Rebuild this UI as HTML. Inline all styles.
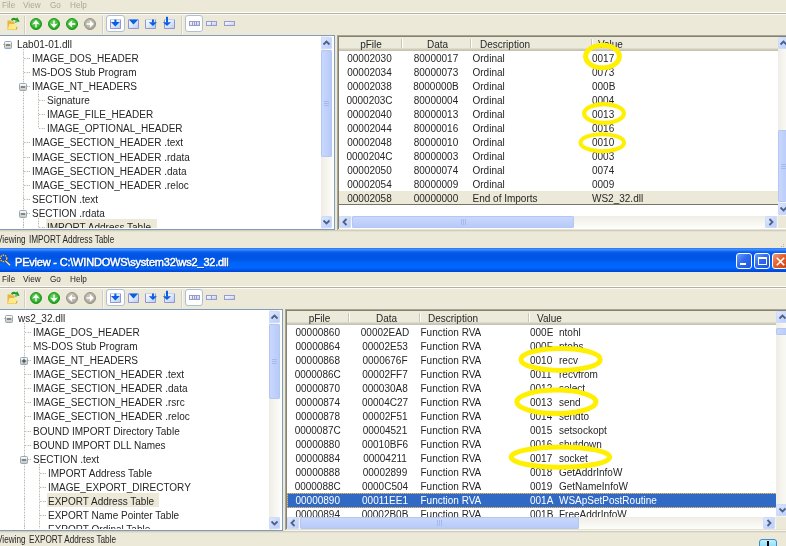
<!DOCTYPE html>
<html><head><meta charset="utf-8"><style>
html,body{margin:0;padding:0;}
body{width:786px;height:546px;overflow:hidden;position:relative;background:#ECE9D8;font-family:"Liberation Sans",sans-serif;}
.t{position:absolute;white-space:pre;line-height:14px;font-family:"Liberation Sans",sans-serif;color:#262626;}
.r{position:absolute;}
</style></head><body>
<svg width="0" height="0" style="position:absolute"><defs>
<linearGradient id="boxg" x1="0" y1="0" x2="0" y2="1"><stop offset="0" stop-color="#FFFFFF"/><stop offset="1" stop-color="#C9C3AE"/></linearGradient>
<linearGradient id="bxg" x1="0" y1="0" x2="1" y2="1"><stop offset="0" stop-color="#FFFFFF"/><stop offset="0.5" stop-color="#DDE8FA"/><stop offset="1" stop-color="#B4CCF2"/></linearGradient>
<radialGradient id="gg" cx="0.45" cy="0.4" r="0.6"><stop offset="0" stop-color="#7CD870"/><stop offset="0.6" stop-color="#3CBB34"/><stop offset="1" stop-color="#1E9E1C"/></radialGradient>
<radialGradient id="gy" cx="0.45" cy="0.4" r="0.6"><stop offset="0" stop-color="#CFCDC3"/><stop offset="0.6" stop-color="#B8B5A9"/><stop offset="1" stop-color="#A3A094"/></radialGradient>
</defs></svg>
<div style="position:absolute;left:0;top:0;width:786px;height:546px;overflow:hidden;will-change:transform">
<div class="t" style="left:1.5px;top:-2px;font-size:9.3px;color:#ACA899;font-weight:normal;transform:scaleX(0.88);transform-origin:0 0;">File</div>
<div class="t" style="left:23px;top:-2px;font-size:9.3px;color:#ACA899;font-weight:normal;transform:scaleX(0.88);transform-origin:0 0;">View</div>
<div class="t" style="left:50px;top:-2px;font-size:9.3px;color:#ACA899;font-weight:normal;transform:scaleX(0.88);transform-origin:0 0;">Go</div>
<div class="t" style="left:69.5px;top:-2px;font-size:9.3px;color:#ACA899;font-weight:normal;transform:scaleX(0.88);transform-origin:0 0;">Help</div>
<div class="r" style="left:0px;top:12px;width:786px;height:1px;background:#FFFFFF;"></div>
<div class="r" style="left:0px;top:13px;width:786px;height:1px;background:#B5B19F;"></div>
<div class="r" style="left:0px;top:14px;width:786px;height:1px;background:#FAF9F4;"></div>
<svg class="r" style="left:7px;top:17px;" width="13" height="14" viewBox="0 0 13 14"><path d="M0.5 3.5 L3.5 3.5 L4.5 4.5 L7.5 4.5 L7.5 12.8 L0.5 12.8 Z" fill="#E6B73A"/><path d="M0.8 12.8 L2.3 7 L9.8 7 L8.3 12.8 Z" fill="#FFE98A"/><path d="M0.6 12.8 L8.6 12.8 L9.6 9.5 L10.6 10.5 L9.2 13 L0.6 13 Z" fill="#D9A11C"/><path d="M4 2.6 Q5.5 -0.2 9.2 1.4 L10.2 0.2 L12.6 4.6 L8 5.8 L8.9 3.4 Q6.5 2.2 5 4 Z" fill="#1E9A1E"/><path d="M9 3.2 L11.3 4.3 L9.3 5 Z" fill="#6FE06A"/></svg>
<div class="r" style="left:24px;top:16px;width:1px;height:18px;background:#D3CFBF;"></div>
<div class="r" style="left:25px;top:16px;width:1px;height:18px;background:#F7F6F0;"></div>
<svg class="r" style="left:30px;top:18px;" width="12" height="12" viewBox="0 0 12 12"><circle cx="6" cy="6" r="5.5" fill="url(#gg)" stroke="#139014" stroke-width="0.9"/><g transform="rotate(0 6 6)"><path d="M6 2.1 L9.9 6.4 Q8 5.8 6.65 6.1 L6.65 9.5 L5.35 9.5 L5.35 6.1 Q4 5.8 2.1 6.4 Z" fill="#fff"/></g></svg>
<svg class="r" style="left:48px;top:18px;" width="12" height="12" viewBox="0 0 12 12"><circle cx="6" cy="6" r="5.5" fill="url(#gg)" stroke="#139014" stroke-width="0.9"/><g transform="rotate(180 6 6)"><path d="M6 2.1 L9.9 6.4 Q8 5.8 6.65 6.1 L6.65 9.5 L5.35 9.5 L5.35 6.1 Q4 5.8 2.1 6.4 Z" fill="#fff"/></g></svg>
<svg class="r" style="left:66px;top:18px;" width="12" height="12" viewBox="0 0 12 12"><circle cx="6" cy="6" r="5.5" fill="url(#gg)" stroke="#139014" stroke-width="0.9"/><g transform="rotate(-90 6 6)"><path d="M6 2.1 L9.9 6.4 Q8 5.8 6.65 6.1 L6.65 9.5 L5.35 9.5 L5.35 6.1 Q4 5.8 2.1 6.4 Z" fill="#fff"/></g></svg>
<svg class="r" style="left:84px;top:18px;" width="12" height="12" viewBox="0 0 12 12"><circle cx="6" cy="6" r="5.5" fill="url(#gy)" stroke="#8F8C80" stroke-width="0.9"/><g transform="rotate(90 6 6)"><path d="M6 2.1 L9.9 6.4 Q8 5.8 6.65 6.1 L6.65 9.5 L5.35 9.5 L5.35 6.1 Q4 5.8 2.1 6.4 Z" fill="#fff"/></g></svg>
<div class="r" style="left:102px;top:16px;width:1px;height:18px;background:#D3CFBF;"></div>
<div class="r" style="left:103px;top:16px;width:1px;height:18px;background:#F7F6F0;"></div>
<div class="r" style="left:106px;top:15px;width:19px;height:17px;background:#FFFFFF;border:1px solid #AFC0D3;border-radius:3px;box-sizing:border-box;"></div>
<svg class="r" style="left:110px;top:19px;overflow:visible;" width="11" height="10" viewBox="0 0 11 10"><rect x="0.5" y="0.5" width="10" height="9" fill="url(#bxg)"/><path d="M0.5 0.5 L0.5 9.5 L10.5 9.5 L10.5 0.5" fill="none" stroke="#9494D0"/><line x1="0.5" y1="0.5" x2="10.5" y2="0.5" stroke="#C8D0F0"/><path d="M0.9 3 L9.8 3 L5.35 7.6 Z" fill="#0A5FE0"/><rect x="4.4" y="0.6" width="2" height="3" fill="#0A5FE0"/></svg>
<svg class="r" style="left:127.5px;top:19px;overflow:visible;" width="11" height="10" viewBox="0 0 11 10"><rect x="0.5" y="0.5" width="10" height="9" fill="url(#bxg)"/><path d="M0.5 0.5 L0.5 9.5 L10.5 9.5 L10.5 0.5" fill="none" stroke="#9494D0"/><line x1="0.5" y1="0.5" x2="10.5" y2="0.5" stroke="#C8D0F0"/><path d="M0.8 0.6 L10.2 0.6 L5.5 5.4 Z" fill="#0A5FE0"/></svg>
<svg class="r" style="left:145px;top:19px;overflow:visible;" width="11" height="10" viewBox="0 0 11 10"><rect x="0.5" y="0.5" width="10" height="9" fill="url(#bxg)"/><path d="M0.5 0.5 L0.5 9.5 L10.5 9.5 L10.5 0.5" fill="none" stroke="#9494D0"/><line x1="0.5" y1="0.5" x2="10.5" y2="0.5" stroke="#C8D0F0"/><path d="M3.8 3.2 L12 3.2 L7.9 7 Z" fill="#0A5FE0"/><rect x="7" y="0.5" width="1.9" height="3.2" fill="#0A5FE0"/></svg>
<svg class="r" style="left:164px;top:19px;overflow:visible;" width="11" height="10" viewBox="0 0 11 10"><rect x="0.5" y="0.5" width="10" height="9" fill="url(#bxg)"/><path d="M0.5 0.5 L0.5 9.5 L10.5 9.5 L10.5 0.5" fill="none" stroke="#9494D0"/><line x1="0.5" y1="0.5" x2="10.5" y2="0.5" stroke="#C8D0F0"/><path d="M-1.1 3.2 L7.1 3.2 L3 7 Z" fill="#0A5FE0"/><rect x="2" y="-2.2" width="2" height="5.8" fill="#0A5FE0"/></svg>
<div class="r" style="left:181px;top:16px;width:1px;height:18px;background:#D3CFBF;"></div>
<div class="r" style="left:182px;top:16px;width:1px;height:18px;background:#F7F6F0;"></div>
<div class="r" style="left:185px;top:15px;width:18px;height:17px;background:#FFFFFF;border:1px solid #AFC0D3;border-radius:3px;box-sizing:border-box;"></div>
<svg class="r" style="left:189px;top:21px;" width="11" height="5" viewBox="0 0 11 5"><rect x="0.5" y="0.5" width="10" height="4" fill="url(#bxg)" stroke="#9A9ACB"/><line x1="3.5" y1="1" x2="3.5" y2="4" stroke="#9A9ACB"/><line x1="5.5" y1="1" x2="5.5" y2="4" stroke="#9A9ACB"/><line x1="7.5" y1="1" x2="7.5" y2="4" stroke="#9A9ACB"/></svg>
<svg class="r" style="left:206px;top:21px;" width="11" height="5" viewBox="0 0 11 5"><rect x="0.5" y="0.5" width="10" height="4" fill="url(#bxg)" stroke="#9A9ACB"/><line x1="5.5" y1="1" x2="5.5" y2="4" stroke="#9A9ACB"/></svg>
<svg class="r" style="left:224px;top:21px;" width="11" height="5" viewBox="0 0 11 5"><rect x="0.5" y="0.5" width="10" height="4" fill="url(#bxg)" stroke="#9A9ACB"/></svg>
<div class="r" style="left:0px;top:35px;width:335px;height:1px;background:#7F9DB9;"></div>
<div class="r" style="left:0px;top:229px;width:335px;height:1px;background:#7F9DB9;"></div>
<div class="r" style="left:334px;top:35px;width:1px;height:195px;background:#7F9DB9;"></div>
<div class="r" style="left:0px;top:36px;width:334px;height:193px;background:#FFFFFF;"></div>
<div class="r" style="left:0;top:36px;width:334px;height:192px;overflow:hidden">
<div class="r" style="left:3px;top:8px;width:2px;height:1px;background:repeating-linear-gradient(90deg,#BDBDB5 0 1px,#EAEAE5 1px 2.7px);"></div>
<div class="r" style="left:23px;top:13px;width:1px;height:201px;background:repeating-linear-gradient(180deg,#BDBDB5 0 1px,#EAEAE5 1px 2.7px);"></div>
<div class="r" style="left:24px;top:22px;width:6px;height:1px;background:repeating-linear-gradient(90deg,#BDBDB5 0 1px,#EAEAE5 1px 2.7px);"></div>
<div class="r" style="left:24px;top:36px;width:6px;height:1px;background:repeating-linear-gradient(90deg,#BDBDB5 0 1px,#EAEAE5 1px 2.7px);"></div>
<div class="r" style="left:24px;top:50px;width:6px;height:1px;background:repeating-linear-gradient(90deg,#BDBDB5 0 1px,#EAEAE5 1px 2.7px);"></div>
<div class="r" style="left:38px;top:55px;width:1px;height:37px;background:repeating-linear-gradient(180deg,#BDBDB5 0 1px,#EAEAE5 1px 2.7px);"></div>
<div class="r" style="left:39px;top:64px;width:6px;height:1px;background:repeating-linear-gradient(90deg,#BDBDB5 0 1px,#EAEAE5 1px 2.7px);"></div>
<div class="r" style="left:39px;top:78px;width:6px;height:1px;background:repeating-linear-gradient(90deg,#BDBDB5 0 1px,#EAEAE5 1px 2.7px);"></div>
<div class="r" style="left:39px;top:92px;width:6px;height:1px;background:repeating-linear-gradient(90deg,#BDBDB5 0 1px,#EAEAE5 1px 2.7px);"></div>
<div class="r" style="left:24px;top:106px;width:6px;height:1px;background:repeating-linear-gradient(90deg,#BDBDB5 0 1px,#EAEAE5 1px 2.7px);"></div>
<div class="r" style="left:24px;top:121px;width:6px;height:1px;background:repeating-linear-gradient(90deg,#BDBDB5 0 1px,#EAEAE5 1px 2.7px);"></div>
<div class="r" style="left:24px;top:135px;width:6px;height:1px;background:repeating-linear-gradient(90deg,#BDBDB5 0 1px,#EAEAE5 1px 2.7px);"></div>
<div class="r" style="left:24px;top:149px;width:6px;height:1px;background:repeating-linear-gradient(90deg,#BDBDB5 0 1px,#EAEAE5 1px 2.7px);"></div>
<div class="r" style="left:24px;top:163px;width:6px;height:1px;background:repeating-linear-gradient(90deg,#BDBDB5 0 1px,#EAEAE5 1px 2.7px);"></div>
<div class="r" style="left:24px;top:177px;width:6px;height:1px;background:repeating-linear-gradient(90deg,#BDBDB5 0 1px,#EAEAE5 1px 2.7px);"></div>
<div class="r" style="left:38px;top:182px;width:1px;height:32px;background:repeating-linear-gradient(180deg,#BDBDB5 0 1px,#EAEAE5 1px 2.7px);"></div>
<div class="r" style="left:39px;top:191px;width:6px;height:1px;background:repeating-linear-gradient(90deg,#BDBDB5 0 1px,#EAEAE5 1px 2.7px);"></div>
<div class="t" style="left:17px;top:2px;font-size:10px;color:#262626;font-weight:normal;">Lab01-01.dll</div>
<svg class="r" style="left:4px;top:5px;" width="8" height="8" viewBox="0 0 8 8"><rect x="0.5" y="0.5" width="7" height="7" rx="1" fill="url(#boxg)" stroke="#8EA8C6"/><line x1="1.8" y1="4" x2="6.2" y2="4" stroke="#3A3A3A" stroke-width="1.1"/></svg>
<div class="t" style="left:32px;top:16px;font-size:10px;color:#262626;font-weight:normal;">IMAGE_DOS_HEADER</div>
<div class="t" style="left:32px;top:30px;font-size:10px;color:#262626;font-weight:normal;">MS-DOS Stub Program</div>
<div class="t" style="left:32px;top:44px;font-size:10px;color:#262626;font-weight:normal;">IMAGE_NT_HEADERS</div>
<svg class="r" style="left:19px;top:47px;" width="8" height="8" viewBox="0 0 8 8"><rect x="0.5" y="0.5" width="7" height="7" rx="1" fill="url(#boxg)" stroke="#8EA8C6"/><line x1="1.8" y1="4" x2="6.2" y2="4" stroke="#3A3A3A" stroke-width="1.1"/></svg>
<div class="t" style="left:47px;top:58px;font-size:10px;color:#262626;font-weight:normal;">Signature</div>
<div class="t" style="left:47px;top:72px;font-size:10px;color:#262626;font-weight:normal;">IMAGE_FILE_HEADER</div>
<div class="t" style="left:47px;top:86px;font-size:10px;color:#262626;font-weight:normal;">IMAGE_OPTIONAL_HEADER</div>
<div class="t" style="left:32px;top:100px;font-size:10px;color:#262626;font-weight:normal;">IMAGE_SECTION_HEADER .text</div>
<div class="t" style="left:32px;top:115px;font-size:10px;color:#262626;font-weight:normal;">IMAGE_SECTION_HEADER .rdata</div>
<div class="t" style="left:32px;top:129px;font-size:10px;color:#262626;font-weight:normal;">IMAGE_SECTION_HEADER .data</div>
<div class="t" style="left:32px;top:143px;font-size:10px;color:#262626;font-weight:normal;">IMAGE_SECTION_HEADER .reloc</div>
<div class="t" style="left:32px;top:157px;font-size:10px;color:#262626;font-weight:normal;">SECTION .text</div>
<div class="t" style="left:32px;top:171px;font-size:10px;color:#262626;font-weight:normal;">SECTION .rdata</div>
<svg class="r" style="left:19px;top:174px;" width="8" height="8" viewBox="0 0 8 8"><rect x="0.5" y="0.5" width="7" height="7" rx="1" fill="url(#boxg)" stroke="#8EA8C6"/><line x1="1.8" y1="4" x2="6.2" y2="4" stroke="#3A3A3A" stroke-width="1.1"/></svg>
<div class="r" style="left:45.5px;top:183px;width:111.5px;height:14px;background:#ECE9D8;"></div>
<div class="t" style="left:47px;top:185px;font-size:10px;color:#262626;font-weight:normal;">IMPORT Address Table</div>
</div>
<div class="r" style="left:321px;top:36px;width:12px;height:193px;background:linear-gradient(90deg,#EFEDE5,#FDFDFA);"></div>
<div class="r" style="left:321px;top:37px;width:11px;height:12px;background:linear-gradient(135deg,#E3EBFE 0%,#C8D7FC 55%,#B9CCFA 100%);border-radius:2px;box-shadow:inset 0 0 0 1px #CCDAFB;"></div>
<svg class="r" style="left:321px;top:37px;" width="11" height="12" viewBox="0 0 11 12"><polyline points="2.5,7.5 5.5,4.5 8.5,7.5" fill="none" stroke="#4D6185" stroke-width="1.8"/></svg>
<div class="r" style="left:321px;top:50px;width:11px;height:107px;background:linear-gradient(90deg,#CCD9FC,#BDCFFA 60%,#B7CAF7);border-radius:2px;box-shadow:inset 0 0 0 1px #B3C6F4;"></div>
<div class="r" style="left:324px;top:101px;width:5px;height:1px;background:#A4B9EE;"></div>
<div class="r" style="left:324px;top:103px;width:5px;height:1px;background:#A4B9EE;"></div>
<div class="r" style="left:324px;top:105px;width:5px;height:1px;background:#A4B9EE;"></div>
<div class="r" style="left:321px;top:216px;width:11px;height:12px;background:linear-gradient(135deg,#E3EBFE 0%,#C8D7FC 55%,#B9CCFA 100%);border-radius:2px;box-shadow:inset 0 0 0 1px #CCDAFB;"></div>
<svg class="r" style="left:321px;top:216px;" width="11" height="12" viewBox="0 0 11 12"><polyline points="2.5,4.5 5.5,7.5 8.5,4.5" fill="none" stroke="#4D6185" stroke-width="1.8"/></svg>
<div class="r" style="left:337px;top:35px;width:449px;height:196px;background:#FFFFFF;"></div>
<div class="r" style="left:337px;top:35px;width:449px;height:1px;background:#A7A493;"></div>
<div class="r" style="left:337px;top:36px;width:449px;height:1px;background:#85836F;"></div>
<div class="r" style="left:337px;top:35px;width:1px;height:196px;background:#A7A493;"></div>
<div class="r" style="left:338px;top:36px;width:1px;height:195px;background:#85836F;"></div>
<div class="r" style="left:337px;top:230px;width:449px;height:1px;background:#F4F3EE;"></div>
<div class="r" style="left:338px;top:229px;width:449px;height:1px;background:#E6E3D3;"></div>
<div class="r" style="left:339px;top:37px;width:439px;height:14px;background:#EBEADB;"></div>
<div class="r" style="left:339px;top:48px;width:439px;height:1px;background:#DFDBCB;"></div>
<div class="r" style="left:339px;top:49px;width:439px;height:1px;background:#D0CCBC;"></div>
<div class="r" style="left:339px;top:50px;width:439px;height:1px;background:#C6C2B1;"></div>
<div class="r" style="left:401px;top:39px;width:1px;height:9px;background:#CAC6B6;"></div>
<div class="r" style="left:402px;top:39px;width:1px;height:9px;background:#FFFFFF;"></div>
<div class="r" style="left:470px;top:39px;width:1px;height:9px;background:#CAC6B6;"></div>
<div class="r" style="left:471px;top:39px;width:1px;height:9px;background:#FFFFFF;"></div>
<div class="r" style="left:591px;top:39px;width:1px;height:9px;background:#CAC6B6;"></div>
<div class="r" style="left:592px;top:39px;width:1px;height:9px;background:#FFFFFF;"></div>
<div class="t" style="left:331px;top:38px;width:80px;text-align:center;font-size:10px">pFile</div>
<div class="t" style="left:397.5px;top:38px;width:80px;text-align:center;font-size:10px">Data</div>
<div class="t" style="left:480px;top:38px;font-size:10px;color:#262626;font-weight:normal;">Description</div>
<div class="t" style="left:598px;top:38px;font-size:10px;color:#262626;font-weight:normal;">Value</div>
<div class="r" style="left:339px;top:51px;width:439px;height:165px;overflow:hidden">
<div class="t" style="left:-9.5px;top:1px;width:80px;text-align:center;font-size:10px;color:#262626">00002030</div>
<div class="t" style="left:57px;top:1px;width:80px;text-align:center;font-size:10px;color:#262626">80000017</div>
<div class="t" style="left:133.5px;top:1px;font-size:10px;color:#262626;font-weight:normal;">Ordinal</div>
<div class="t" style="left:253px;top:1px;font-size:10px;color:#262626;font-weight:normal;">0017</div>
<div class="t" style="left:-9.5px;top:15px;width:80px;text-align:center;font-size:10px;color:#262626">00002034</div>
<div class="t" style="left:57px;top:15px;width:80px;text-align:center;font-size:10px;color:#262626">80000073</div>
<div class="t" style="left:133.5px;top:15px;font-size:10px;color:#262626;font-weight:normal;">Ordinal</div>
<div class="t" style="left:253px;top:15px;font-size:10px;color:#262626;font-weight:normal;">0073</div>
<div class="t" style="left:-9.5px;top:29px;width:80px;text-align:center;font-size:10px;color:#262626">00002038</div>
<div class="t" style="left:57px;top:29px;width:80px;text-align:center;font-size:10px;color:#262626">8000000B</div>
<div class="t" style="left:133.5px;top:29px;font-size:10px;color:#262626;font-weight:normal;">Ordinal</div>
<div class="t" style="left:253px;top:29px;font-size:10px;color:#262626;font-weight:normal;">000B</div>
<div class="t" style="left:-9.5px;top:43px;width:80px;text-align:center;font-size:10px;color:#262626">0000203C</div>
<div class="t" style="left:57px;top:43px;width:80px;text-align:center;font-size:10px;color:#262626">80000004</div>
<div class="t" style="left:133.5px;top:43px;font-size:10px;color:#262626;font-weight:normal;">Ordinal</div>
<div class="t" style="left:253px;top:43px;font-size:10px;color:#262626;font-weight:normal;">0004</div>
<div class="t" style="left:-9.5px;top:57px;width:80px;text-align:center;font-size:10px;color:#262626">00002040</div>
<div class="t" style="left:57px;top:57px;width:80px;text-align:center;font-size:10px;color:#262626">80000013</div>
<div class="t" style="left:133.5px;top:57px;font-size:10px;color:#262626;font-weight:normal;">Ordinal</div>
<div class="t" style="left:253px;top:57px;font-size:10px;color:#262626;font-weight:normal;">0013</div>
<div class="t" style="left:-9.5px;top:71px;width:80px;text-align:center;font-size:10px;color:#262626">00002044</div>
<div class="t" style="left:57px;top:71px;width:80px;text-align:center;font-size:10px;color:#262626">80000016</div>
<div class="t" style="left:133.5px;top:71px;font-size:10px;color:#262626;font-weight:normal;">Ordinal</div>
<div class="t" style="left:253px;top:71px;font-size:10px;color:#262626;font-weight:normal;">0016</div>
<div class="t" style="left:-9.5px;top:85px;width:80px;text-align:center;font-size:10px;color:#262626">00002048</div>
<div class="t" style="left:57px;top:85px;width:80px;text-align:center;font-size:10px;color:#262626">80000010</div>
<div class="t" style="left:133.5px;top:85px;font-size:10px;color:#262626;font-weight:normal;">Ordinal</div>
<div class="t" style="left:253px;top:85px;font-size:10px;color:#262626;font-weight:normal;">0010</div>
<div class="t" style="left:-9.5px;top:99px;width:80px;text-align:center;font-size:10px;color:#262626">0000204C</div>
<div class="t" style="left:57px;top:99px;width:80px;text-align:center;font-size:10px;color:#262626">80000003</div>
<div class="t" style="left:133.5px;top:99px;font-size:10px;color:#262626;font-weight:normal;">Ordinal</div>
<div class="t" style="left:253px;top:99px;font-size:10px;color:#262626;font-weight:normal;">0003</div>
<div class="t" style="left:-9.5px;top:113px;width:80px;text-align:center;font-size:10px;color:#262626">00002050</div>
<div class="t" style="left:57px;top:113px;width:80px;text-align:center;font-size:10px;color:#262626">80000074</div>
<div class="t" style="left:133.5px;top:113px;font-size:10px;color:#262626;font-weight:normal;">Ordinal</div>
<div class="t" style="left:253px;top:113px;font-size:10px;color:#262626;font-weight:normal;">0074</div>
<div class="t" style="left:-9.5px;top:127px;width:80px;text-align:center;font-size:10px;color:#262626">00002054</div>
<div class="t" style="left:57px;top:127px;width:80px;text-align:center;font-size:10px;color:#262626">80000009</div>
<div class="t" style="left:133.5px;top:127px;font-size:10px;color:#262626;font-weight:normal;">Ordinal</div>
<div class="t" style="left:253px;top:127px;font-size:10px;color:#262626;font-weight:normal;">0009</div>
<div class="r" style="left:0px;top:140px;width:439px;height:14px;background:#ECE9D8;"></div>
<div class="r" style="left:0px;top:153px;width:439px;height:1px;background:#77756A;"></div>
<div class="t" style="left:-9.5px;top:141px;width:80px;text-align:center;font-size:10px;color:#262626">00002058</div>
<div class="t" style="left:57px;top:141px;width:80px;text-align:center;font-size:10px;color:#262626">00000000</div>
<div class="t" style="left:133.5px;top:141px;font-size:10px;color:#262626;font-weight:normal;">End of Imports</div>
<div class="t" style="left:253px;top:141px;font-size:10px;color:#262626;font-weight:normal;">WS2_32.dll</div>
</div>
<div class="r" style="left:778px;top:37px;width:11px;height:179px;background:linear-gradient(90deg,#EFEDE5,#FDFDFA);"></div>
<div class="r" style="left:778px;top:37px;width:11px;height:12px;background:linear-gradient(135deg,#E3EBFE 0%,#C8D7FC 55%,#B9CCFA 100%);border-radius:2px;box-shadow:inset 0 0 0 1px #CCDAFB;"></div>
<svg class="r" style="left:778px;top:37px;" width="11" height="12" viewBox="0 0 11 12"><polyline points="2.5,7.5 5.5,4.5 8.5,7.5" fill="none" stroke="#4D6185" stroke-width="1.8"/></svg>
<div class="r" style="left:778px;top:130px;width:11px;height:72px;background:linear-gradient(90deg,#CCD9FC,#BDCFFA 60%,#B7CAF7);border-radius:2px;box-shadow:inset 0 0 0 1px #B3C6F4;"></div>
<div class="r" style="left:781px;top:164px;width:5px;height:1px;background:#A4B9EE;"></div>
<div class="r" style="left:781px;top:166px;width:5px;height:1px;background:#A4B9EE;"></div>
<div class="r" style="left:781px;top:168px;width:5px;height:1px;background:#A4B9EE;"></div>
<div class="r" style="left:778px;top:203px;width:11px;height:12px;background:linear-gradient(135deg,#E3EBFE 0%,#C8D7FC 55%,#B9CCFA 100%);border-radius:2px;box-shadow:inset 0 0 0 1px #CCDAFB;"></div>
<svg class="r" style="left:778px;top:203px;" width="11" height="12" viewBox="0 0 11 12"><polyline points="2.5,4.5 5.5,7.5 8.5,4.5" fill="none" stroke="#4D6185" stroke-width="1.8"/></svg>
<div class="r" style="left:778px;top:216px;width:11px;height:12px;background:#ECE9D8;"></div>
<div class="r" style="left:339px;top:216px;width:439px;height:12px;background:linear-gradient(180deg,#EFEDE5,#FDFDFA);"></div>
<div class="r" style="left:339px;top:216px;width:12px;height:12px;background:linear-gradient(135deg,#E3EBFE 0%,#C8D7FC 55%,#B9CCFA 100%);border-radius:2px;box-shadow:inset 0 0 0 1px #CCDAFB;"></div>
<svg class="r" style="left:339px;top:216px;" width="12" height="12" viewBox="0 0 12 12"><polyline points="7.5,3.0 4.5,6.0 7.5,9.0" fill="none" stroke="#4D6185" stroke-width="1.8"/></svg>
<div class="r" style="left:352px;top:216px;width:222px;height:12px;background:linear-gradient(180deg,#CCD9FC,#BDCFFA 60%,#B7CAF7);border-radius:2px;box-shadow:inset 0 0 0 1px #B3C6F4;"></div>
<div class="r" style="left:461px;top:219px;width:1px;height:6px;background:#A4B9EE;"></div>
<div class="r" style="left:463px;top:219px;width:1px;height:6px;background:#A4B9EE;"></div>
<div class="r" style="left:465px;top:219px;width:1px;height:6px;background:#A4B9EE;"></div>
<div class="r" style="left:765px;top:216px;width:12px;height:12px;background:linear-gradient(135deg,#E3EBFE 0%,#C8D7FC 55%,#B9CCFA 100%);border-radius:2px;box-shadow:inset 0 0 0 1px #CCDAFB;"></div>
<svg class="r" style="left:765px;top:216px;" width="12" height="12" viewBox="0 0 12 12"><polyline points="4.5,3.0 7.5,6.0 4.5,9.0" fill="none" stroke="#4D6185" stroke-width="1.8"/></svg>
<div class="r" style="left:0px;top:230px;width:786px;height:1px;background:#D2CEBD;"></div>
<div class="r" style="left:0px;top:231px;width:786px;height:1px;background:#E3E0D1;"></div>
<div class="t" style="left:-3px;top:233px;font-size:10px;transform:scaleX(0.82);transform-origin:0 0">Viewing</div>
<div class="t" style="left:29px;top:233px;font-size:10px;transform:scaleX(0.82);transform-origin:0 0">IMPORT Address Table</div>
<div class="r" style="left:783px;top:244px;width:1px;height:1px;background:#B8B4A4;"></div>
<div class="r" style="left:781px;top:246px;width:1px;height:1px;background:#B8B4A4;"></div>
<div class="r" style="left:783px;top:246px;width:1px;height:1px;background:#B8B4A4;"></div>
<div class="r" style="left:0px;top:248px;width:786px;height:24px;background:linear-gradient(180deg,#2A6FE6 0px,#3D8EFF 1px,#3A8CFF 2px,#1A6CF5 3px,#0358E8 5px,#0054E3 9px,#0058EA 12px,#0064FB 15px,#0066FF 19px,#0060F6 21px,#0048D8 23px);"></div>
<svg class="r" style="left:0px;top:254px;" width="12" height="13" viewBox="0 0 12 13"><circle cx="3.6" cy="4.4" r="3.2" fill="none" stroke="#5A4A30" stroke-width="1.6"/><circle cx="3.6" cy="4.4" r="3.2" fill="none" stroke="#E8DCC0" stroke-width="1.2" stroke-dasharray="1.3 1"/><line x1="6" y1="7.4" x2="10" y2="11.2" stroke="#6A5A40" stroke-width="2.2"/><line x1="6" y1="7.4" x2="10" y2="11.2" stroke="#F0E8D0" stroke-width="1.2"/></svg>
<div class="t" style="left:15px;top:255px;font-size:11px;color:#FFFFFF;font-weight:normal;letter-spacing:-0.2px;-webkit-text-stroke:0.45px #FFFFFF;text-shadow:1px 1px 0 #0A3A9A;">PEview - C:\WINDOWS\system32\ws2_32.dll</div>
<div class="r" style="left:736px;top:253px;width:16px;height:16px;background:linear-gradient(135deg,#6E9CF8 0%,#2F6BEE 45%,#1E55DA 100%);border:1px solid #FFFFFF;border-radius:3px;box-sizing:border-box;"></div>
<div class="r" style="left:754px;top:253px;width:16px;height:16px;background:linear-gradient(135deg,#6E9CF8 0%,#2F6BEE 45%,#1E55DA 100%);border:1px solid #FFFFFF;border-radius:3px;box-sizing:border-box;"></div>
<div class="r" style="left:772px;top:253px;width:16px;height:16px;background:linear-gradient(135deg,#F19C7E 0%,#E3602F 45%,#CC4212 100%);border:1px solid #FFFFFF;border-radius:3px;box-sizing:border-box;"></div>
<div class="r" style="left:740px;top:263px;width:6px;height:2px;background:#FFFFFF;"></div>
<div class="r" style="left:758px;top:257px;width:9px;height:8px;border:1px solid #FFFFFF;border-top-width:2px;box-sizing:border-box;"></div>
<svg class="r" style="left:776px;top:257px;" width="9" height="9" viewBox="0 0 9 9"><path d="M0.8 0.8 L8.2 8.2 M8.2 0.8 L0.8 8.2" stroke="#FFFFFF" stroke-width="1.6"/></svg>
<div class="t" style="left:1.5px;top:272px;font-size:9.3px;color:#262626;font-weight:normal;transform:scaleX(0.88);transform-origin:0 0;">File</div>
<div class="t" style="left:23px;top:272px;font-size:9.3px;color:#262626;font-weight:normal;transform:scaleX(0.88);transform-origin:0 0;">View</div>
<div class="t" style="left:50px;top:272px;font-size:9.3px;color:#262626;font-weight:normal;transform:scaleX(0.88);transform-origin:0 0;">Go</div>
<div class="t" style="left:69.5px;top:272px;font-size:9.3px;color:#262626;font-weight:normal;transform:scaleX(0.88);transform-origin:0 0;">Help</div>
<div class="r" style="left:0px;top:286px;width:786px;height:1px;background:#FFFFFF;"></div>
<div class="r" style="left:0px;top:287px;width:786px;height:1px;background:#B5B19F;"></div>
<div class="r" style="left:0px;top:288px;width:786px;height:1px;background:#FAF9F4;"></div>
<svg class="r" style="left:7px;top:291px;" width="13" height="14" viewBox="0 0 13 14"><path d="M0.5 3.5 L3.5 3.5 L4.5 4.5 L7.5 4.5 L7.5 12.8 L0.5 12.8 Z" fill="#E6B73A"/><path d="M0.8 12.8 L2.3 7 L9.8 7 L8.3 12.8 Z" fill="#FFE98A"/><path d="M0.6 12.8 L8.6 12.8 L9.6 9.5 L10.6 10.5 L9.2 13 L0.6 13 Z" fill="#D9A11C"/><path d="M4 2.6 Q5.5 -0.2 9.2 1.4 L10.2 0.2 L12.6 4.6 L8 5.8 L8.9 3.4 Q6.5 2.2 5 4 Z" fill="#1E9A1E"/><path d="M9 3.2 L11.3 4.3 L9.3 5 Z" fill="#6FE06A"/></svg>
<div class="r" style="left:24px;top:290px;width:1px;height:18px;background:#D3CFBF;"></div>
<div class="r" style="left:25px;top:290px;width:1px;height:18px;background:#F7F6F0;"></div>
<svg class="r" style="left:30px;top:292px;" width="12" height="12" viewBox="0 0 12 12"><circle cx="6" cy="6" r="5.5" fill="url(#gg)" stroke="#139014" stroke-width="0.9"/><g transform="rotate(0 6 6)"><path d="M6 2.1 L9.9 6.4 Q8 5.8 6.65 6.1 L6.65 9.5 L5.35 9.5 L5.35 6.1 Q4 5.8 2.1 6.4 Z" fill="#fff"/></g></svg>
<svg class="r" style="left:48px;top:292px;" width="12" height="12" viewBox="0 0 12 12"><circle cx="6" cy="6" r="5.5" fill="url(#gg)" stroke="#139014" stroke-width="0.9"/><g transform="rotate(180 6 6)"><path d="M6 2.1 L9.9 6.4 Q8 5.8 6.65 6.1 L6.65 9.5 L5.35 9.5 L5.35 6.1 Q4 5.8 2.1 6.4 Z" fill="#fff"/></g></svg>
<svg class="r" style="left:66px;top:292px;" width="12" height="12" viewBox="0 0 12 12"><circle cx="6" cy="6" r="5.5" fill="url(#gy)" stroke="#8F8C80" stroke-width="0.9"/><g transform="rotate(-90 6 6)"><path d="M6 2.1 L9.9 6.4 Q8 5.8 6.65 6.1 L6.65 9.5 L5.35 9.5 L5.35 6.1 Q4 5.8 2.1 6.4 Z" fill="#fff"/></g></svg>
<svg class="r" style="left:84px;top:292px;" width="12" height="12" viewBox="0 0 12 12"><circle cx="6" cy="6" r="5.5" fill="url(#gy)" stroke="#8F8C80" stroke-width="0.9"/><g transform="rotate(90 6 6)"><path d="M6 2.1 L9.9 6.4 Q8 5.8 6.65 6.1 L6.65 9.5 L5.35 9.5 L5.35 6.1 Q4 5.8 2.1 6.4 Z" fill="#fff"/></g></svg>
<div class="r" style="left:102px;top:290px;width:1px;height:18px;background:#D3CFBF;"></div>
<div class="r" style="left:103px;top:290px;width:1px;height:18px;background:#F7F6F0;"></div>
<div class="r" style="left:106px;top:289px;width:19px;height:17px;background:#FFFFFF;border:1px solid #AFC0D3;border-radius:3px;box-sizing:border-box;"></div>
<svg class="r" style="left:110px;top:293px;overflow:visible;" width="11" height="10" viewBox="0 0 11 10"><rect x="0.5" y="0.5" width="10" height="9" fill="url(#bxg)"/><path d="M0.5 0.5 L0.5 9.5 L10.5 9.5 L10.5 0.5" fill="none" stroke="#9494D0"/><line x1="0.5" y1="0.5" x2="10.5" y2="0.5" stroke="#C8D0F0"/><path d="M0.9 3 L9.8 3 L5.35 7.6 Z" fill="#0A5FE0"/><rect x="4.4" y="0.6" width="2" height="3" fill="#0A5FE0"/></svg>
<svg class="r" style="left:127.5px;top:293px;overflow:visible;" width="11" height="10" viewBox="0 0 11 10"><rect x="0.5" y="0.5" width="10" height="9" fill="url(#bxg)"/><path d="M0.5 0.5 L0.5 9.5 L10.5 9.5 L10.5 0.5" fill="none" stroke="#9494D0"/><line x1="0.5" y1="0.5" x2="10.5" y2="0.5" stroke="#C8D0F0"/><path d="M0.8 0.6 L10.2 0.6 L5.5 5.4 Z" fill="#0A5FE0"/></svg>
<svg class="r" style="left:145px;top:293px;overflow:visible;" width="11" height="10" viewBox="0 0 11 10"><rect x="0.5" y="0.5" width="10" height="9" fill="url(#bxg)"/><path d="M0.5 0.5 L0.5 9.5 L10.5 9.5 L10.5 0.5" fill="none" stroke="#9494D0"/><line x1="0.5" y1="0.5" x2="10.5" y2="0.5" stroke="#C8D0F0"/><path d="M3.8 3.2 L12 3.2 L7.9 7 Z" fill="#0A5FE0"/><rect x="7" y="0.5" width="1.9" height="3.2" fill="#0A5FE0"/></svg>
<svg class="r" style="left:164px;top:293px;overflow:visible;" width="11" height="10" viewBox="0 0 11 10"><rect x="0.5" y="0.5" width="10" height="9" fill="url(#bxg)"/><path d="M0.5 0.5 L0.5 9.5 L10.5 9.5 L10.5 0.5" fill="none" stroke="#9494D0"/><line x1="0.5" y1="0.5" x2="10.5" y2="0.5" stroke="#C8D0F0"/><path d="M-1.1 3.2 L7.1 3.2 L3 7 Z" fill="#0A5FE0"/><rect x="2" y="-2.2" width="2" height="5.8" fill="#0A5FE0"/></svg>
<div class="r" style="left:181px;top:290px;width:1px;height:18px;background:#D3CFBF;"></div>
<div class="r" style="left:182px;top:290px;width:1px;height:18px;background:#F7F6F0;"></div>
<div class="r" style="left:185px;top:289px;width:18px;height:17px;background:#FFFFFF;border:1px solid #AFC0D3;border-radius:3px;box-sizing:border-box;"></div>
<svg class="r" style="left:189px;top:295px;" width="11" height="5" viewBox="0 0 11 5"><rect x="0.5" y="0.5" width="10" height="4" fill="url(#bxg)" stroke="#9A9ACB"/><line x1="3.5" y1="1" x2="3.5" y2="4" stroke="#9A9ACB"/><line x1="5.5" y1="1" x2="5.5" y2="4" stroke="#9A9ACB"/><line x1="7.5" y1="1" x2="7.5" y2="4" stroke="#9A9ACB"/></svg>
<svg class="r" style="left:206px;top:295px;" width="11" height="5" viewBox="0 0 11 5"><rect x="0.5" y="0.5" width="10" height="4" fill="url(#bxg)" stroke="#9A9ACB"/><line x1="5.5" y1="1" x2="5.5" y2="4" stroke="#9A9ACB"/></svg>
<svg class="r" style="left:224px;top:295px;" width="11" height="5" viewBox="0 0 11 5"><rect x="0.5" y="0.5" width="10" height="4" fill="url(#bxg)" stroke="#9A9ACB"/></svg>
<div class="r" style="left:0px;top:309px;width:283px;height:1px;background:#7F9DB9;"></div>
<div class="r" style="left:0px;top:530px;width:283px;height:1px;background:#7F9DB9;"></div>
<div class="r" style="left:282px;top:309px;width:1px;height:222px;background:#7F9DB9;"></div>
<div class="r" style="left:0px;top:310px;width:282px;height:220px;background:#FFFFFF;"></div>
<div class="r" style="left:0;top:310px;width:282px;height:219px;overflow:hidden">
<div class="r" style="left:4px;top:8px;width:2px;height:1px;background:repeating-linear-gradient(90deg,#BDBDB5 0 1px,#EAEAE5 1px 2.7px);"></div>
<div class="r" style="left:24px;top:13px;width:1px;height:228px;background:repeating-linear-gradient(180deg,#BDBDB5 0 1px,#EAEAE5 1px 2.7px);"></div>
<div class="r" style="left:25px;top:22px;width:6px;height:1px;background:repeating-linear-gradient(90deg,#BDBDB5 0 1px,#EAEAE5 1px 2.7px);"></div>
<div class="r" style="left:25px;top:36px;width:6px;height:1px;background:repeating-linear-gradient(90deg,#BDBDB5 0 1px,#EAEAE5 1px 2.7px);"></div>
<div class="r" style="left:25px;top:50px;width:6px;height:1px;background:repeating-linear-gradient(90deg,#BDBDB5 0 1px,#EAEAE5 1px 2.7px);"></div>
<div class="r" style="left:25px;top:64px;width:6px;height:1px;background:repeating-linear-gradient(90deg,#BDBDB5 0 1px,#EAEAE5 1px 2.7px);"></div>
<div class="r" style="left:25px;top:78px;width:6px;height:1px;background:repeating-linear-gradient(90deg,#BDBDB5 0 1px,#EAEAE5 1px 2.7px);"></div>
<div class="r" style="left:25px;top:92px;width:6px;height:1px;background:repeating-linear-gradient(90deg,#BDBDB5 0 1px,#EAEAE5 1px 2.7px);"></div>
<div class="r" style="left:25px;top:106px;width:6px;height:1px;background:repeating-linear-gradient(90deg,#BDBDB5 0 1px,#EAEAE5 1px 2.7px);"></div>
<div class="r" style="left:25px;top:121px;width:6px;height:1px;background:repeating-linear-gradient(90deg,#BDBDB5 0 1px,#EAEAE5 1px 2.7px);"></div>
<div class="r" style="left:25px;top:135px;width:6px;height:1px;background:repeating-linear-gradient(90deg,#BDBDB5 0 1px,#EAEAE5 1px 2.7px);"></div>
<div class="r" style="left:25px;top:149px;width:6px;height:1px;background:repeating-linear-gradient(90deg,#BDBDB5 0 1px,#EAEAE5 1px 2.7px);"></div>
<div class="r" style="left:39px;top:154px;width:1px;height:87px;background:repeating-linear-gradient(180deg,#BDBDB5 0 1px,#EAEAE5 1px 2.7px);"></div>
<div class="r" style="left:40px;top:163px;width:6px;height:1px;background:repeating-linear-gradient(90deg,#BDBDB5 0 1px,#EAEAE5 1px 2.7px);"></div>
<div class="r" style="left:40px;top:177px;width:6px;height:1px;background:repeating-linear-gradient(90deg,#BDBDB5 0 1px,#EAEAE5 1px 2.7px);"></div>
<div class="r" style="left:40px;top:191px;width:6px;height:1px;background:repeating-linear-gradient(90deg,#BDBDB5 0 1px,#EAEAE5 1px 2.7px);"></div>
<div class="r" style="left:40px;top:205px;width:6px;height:1px;background:repeating-linear-gradient(90deg,#BDBDB5 0 1px,#EAEAE5 1px 2.7px);"></div>
<div class="r" style="left:40px;top:219px;width:6px;height:1px;background:repeating-linear-gradient(90deg,#BDBDB5 0 1px,#EAEAE5 1px 2.7px);"></div>
<div class="t" style="left:18px;top:2px;font-size:10px;color:#262626;font-weight:normal;">ws2_32.dll</div>
<svg class="r" style="left:5px;top:5px;" width="8" height="8" viewBox="0 0 8 8"><rect x="0.5" y="0.5" width="7" height="7" rx="1" fill="url(#boxg)" stroke="#8EA8C6"/><line x1="1.8" y1="4" x2="6.2" y2="4" stroke="#3A3A3A" stroke-width="1.1"/></svg>
<div class="t" style="left:33px;top:16px;font-size:10px;color:#262626;font-weight:normal;">IMAGE_DOS_HEADER</div>
<div class="t" style="left:33px;top:30px;font-size:10px;color:#262626;font-weight:normal;">MS-DOS Stub Program</div>
<div class="t" style="left:33px;top:44px;font-size:10px;color:#262626;font-weight:normal;">IMAGE_NT_HEADERS</div>
<svg class="r" style="left:20px;top:47px;" width="8" height="8" viewBox="0 0 8 8"><rect x="0.5" y="0.5" width="7" height="7" rx="1" fill="url(#boxg)" stroke="#8EA8C6"/><line x1="1.8" y1="4" x2="6.2" y2="4" stroke="#3A3A3A" stroke-width="1.1"/><line x1="4" y1="1.8" x2="4" y2="6.2" stroke="#3A3A3A" stroke-width="1.1"/></svg>
<div class="t" style="left:33px;top:58px;font-size:10px;color:#262626;font-weight:normal;">IMAGE_SECTION_HEADER .text</div>
<div class="t" style="left:33px;top:72px;font-size:10px;color:#262626;font-weight:normal;">IMAGE_SECTION_HEADER .data</div>
<div class="t" style="left:33px;top:86px;font-size:10px;color:#262626;font-weight:normal;">IMAGE_SECTION_HEADER .rsrc</div>
<div class="t" style="left:33px;top:100px;font-size:10px;color:#262626;font-weight:normal;">IMAGE_SECTION_HEADER .reloc</div>
<div class="t" style="left:33px;top:115px;font-size:10px;color:#262626;font-weight:normal;">BOUND IMPORT Directory Table</div>
<div class="t" style="left:33px;top:129px;font-size:10px;color:#262626;font-weight:normal;">BOUND IMPORT DLL Names</div>
<div class="t" style="left:33px;top:143px;font-size:10px;color:#262626;font-weight:normal;">SECTION .text</div>
<svg class="r" style="left:20px;top:146px;" width="8" height="8" viewBox="0 0 8 8"><rect x="0.5" y="0.5" width="7" height="7" rx="1" fill="url(#boxg)" stroke="#8EA8C6"/><line x1="1.8" y1="4" x2="6.2" y2="4" stroke="#3A3A3A" stroke-width="1.1"/></svg>
<div class="t" style="left:48px;top:157px;font-size:10px;color:#262626;font-weight:normal;">IMPORT Address Table</div>
<div class="t" style="left:48px;top:171px;font-size:10px;color:#262626;font-weight:normal;">IMAGE_EXPORT_DIRECTORY</div>
<div class="r" style="left:46.5px;top:183px;width:112.5px;height:14px;background:#ECE9D8;"></div>
<div class="t" style="left:48px;top:185px;font-size:10px;color:#262626;font-weight:normal;">EXPORT Address Table</div>
<div class="t" style="left:48px;top:199px;font-size:10px;color:#262626;font-weight:normal;">EXPORT Name Pointer Table</div>
<div class="t" style="left:48px;top:213px;font-size:10px;color:#262626;font-weight:normal;">EXPORT Ordinal Table</div>
</div>
<div class="r" style="left:269px;top:310px;width:12px;height:220px;background:linear-gradient(90deg,#EFEDE5,#FDFDFA);"></div>
<div class="r" style="left:269px;top:311px;width:11px;height:12px;background:linear-gradient(135deg,#E3EBFE 0%,#C8D7FC 55%,#B9CCFA 100%);border-radius:2px;box-shadow:inset 0 0 0 1px #CCDAFB;"></div>
<svg class="r" style="left:269px;top:311px;" width="11" height="12" viewBox="0 0 11 12"><polyline points="2.5,7.5 5.5,4.5 8.5,7.5" fill="none" stroke="#4D6185" stroke-width="1.8"/></svg>
<div class="r" style="left:269px;top:324px;width:11px;height:75px;background:linear-gradient(90deg,#CCD9FC,#BDCFFA 60%,#B7CAF7);border-radius:2px;box-shadow:inset 0 0 0 1px #B3C6F4;"></div>
<div class="r" style="left:272px;top:359px;width:5px;height:1px;background:#A4B9EE;"></div>
<div class="r" style="left:272px;top:361px;width:5px;height:1px;background:#A4B9EE;"></div>
<div class="r" style="left:272px;top:363px;width:5px;height:1px;background:#A4B9EE;"></div>
<div class="r" style="left:269px;top:517px;width:11px;height:12px;background:linear-gradient(135deg,#E3EBFE 0%,#C8D7FC 55%,#B9CCFA 100%);border-radius:2px;box-shadow:inset 0 0 0 1px #CCDAFB;"></div>
<svg class="r" style="left:269px;top:517px;" width="11" height="12" viewBox="0 0 11 12"><polyline points="2.5,4.5 5.5,7.5 8.5,4.5" fill="none" stroke="#4D6185" stroke-width="1.8"/></svg>
<div class="r" style="left:285px;top:309px;width:501px;height:222px;background:#FFFFFF;"></div>
<div class="r" style="left:285px;top:309px;width:501px;height:1px;background:#A7A493;"></div>
<div class="r" style="left:285px;top:310px;width:501px;height:1px;background:#85836F;"></div>
<div class="r" style="left:285px;top:309px;width:1px;height:222px;background:#A7A493;"></div>
<div class="r" style="left:286px;top:310px;width:1px;height:221px;background:#85836F;"></div>
<div class="r" style="left:285px;top:530px;width:501px;height:1px;background:#F4F3EE;"></div>
<div class="r" style="left:286px;top:529px;width:501px;height:1px;background:#E6E3D3;"></div>
<div class="r" style="left:287px;top:311px;width:489px;height:14px;background:#EBEADB;"></div>
<div class="r" style="left:287px;top:322px;width:489px;height:1px;background:#DFDBCB;"></div>
<div class="r" style="left:287px;top:323px;width:489px;height:1px;background:#D0CCBC;"></div>
<div class="r" style="left:287px;top:324px;width:489px;height:1px;background:#C6C2B1;"></div>
<div class="r" style="left:348px;top:313px;width:1px;height:9px;background:#CAC6B6;"></div>
<div class="r" style="left:349px;top:313px;width:1px;height:9px;background:#FFFFFF;"></div>
<div class="r" style="left:419px;top:313px;width:1px;height:9px;background:#CAC6B6;"></div>
<div class="r" style="left:420px;top:313px;width:1px;height:9px;background:#FFFFFF;"></div>
<div class="r" style="left:528px;top:313px;width:1px;height:9px;background:#CAC6B6;"></div>
<div class="r" style="left:529px;top:313px;width:1px;height:9px;background:#FFFFFF;"></div>
<div class="t" style="left:279.5px;top:312px;width:80px;text-align:center;font-size:10px">pFile</div>
<div class="t" style="left:346.5px;top:312px;width:80px;text-align:center;font-size:10px">Data</div>
<div class="t" style="left:428px;top:312px;font-size:10px;color:#262626;font-weight:normal;">Description</div>
<div class="t" style="left:537px;top:312px;font-size:10px;color:#262626;font-weight:normal;">Value</div>
<div class="r" style="left:287px;top:325px;width:489px;height:192px;overflow:hidden">
<div class="t" style="left:-9.300000000000011px;top:1px;width:80px;text-align:center;font-size:10px;color:#262626">00000860</div>
<div class="t" style="left:58px;top:1px;width:80px;text-align:center;font-size:10px;color:#262626">00002EAD</div>
<div class="t" style="left:133.5px;top:1px;font-size:10px;color:#262626;font-weight:normal;">Function RVA</div>
<div class="t" style="left:243px;top:1px;font-size:10px;color:#262626;font-weight:normal;">000E</div>
<div class="t" style="left:272px;top:1px;font-size:10px;color:#262626;font-weight:normal;">ntohl</div>
<div class="t" style="left:-9.300000000000011px;top:15px;width:80px;text-align:center;font-size:10px;color:#262626">00000864</div>
<div class="t" style="left:58px;top:15px;width:80px;text-align:center;font-size:10px;color:#262626">00002E53</div>
<div class="t" style="left:133.5px;top:15px;font-size:10px;color:#262626;font-weight:normal;">Function RVA</div>
<div class="t" style="left:243px;top:15px;font-size:10px;color:#262626;font-weight:normal;">000F</div>
<div class="t" style="left:272px;top:15px;font-size:10px;color:#262626;font-weight:normal;">ntohs</div>
<div class="t" style="left:-9.300000000000011px;top:29px;width:80px;text-align:center;font-size:10px;color:#262626">00000868</div>
<div class="t" style="left:58px;top:29px;width:80px;text-align:center;font-size:10px;color:#262626">0000676F</div>
<div class="t" style="left:133.5px;top:29px;font-size:10px;color:#262626;font-weight:normal;">Function RVA</div>
<div class="t" style="left:243px;top:29px;font-size:10px;color:#262626;font-weight:normal;">0010</div>
<div class="t" style="left:272px;top:29px;font-size:10px;color:#262626;font-weight:normal;">recv</div>
<div class="t" style="left:-9.300000000000011px;top:43px;width:80px;text-align:center;font-size:10px;color:#262626">0000086C</div>
<div class="t" style="left:58px;top:43px;width:80px;text-align:center;font-size:10px;color:#262626">00002FF7</div>
<div class="t" style="left:133.5px;top:43px;font-size:10px;color:#262626;font-weight:normal;">Function RVA</div>
<div class="t" style="left:243px;top:43px;font-size:10px;color:#262626;font-weight:normal;">0011</div>
<div class="t" style="left:272px;top:43px;font-size:10px;color:#262626;font-weight:normal;">recvfrom</div>
<div class="t" style="left:-9.300000000000011px;top:57px;width:80px;text-align:center;font-size:10px;color:#262626">00000870</div>
<div class="t" style="left:58px;top:57px;width:80px;text-align:center;font-size:10px;color:#262626">000030A8</div>
<div class="t" style="left:133.5px;top:57px;font-size:10px;color:#262626;font-weight:normal;">Function RVA</div>
<div class="t" style="left:243px;top:57px;font-size:10px;color:#262626;font-weight:normal;">0012</div>
<div class="t" style="left:272px;top:57px;font-size:10px;color:#262626;font-weight:normal;">select</div>
<div class="t" style="left:-9.300000000000011px;top:71px;width:80px;text-align:center;font-size:10px;color:#262626">00000874</div>
<div class="t" style="left:58px;top:71px;width:80px;text-align:center;font-size:10px;color:#262626">00004C27</div>
<div class="t" style="left:133.5px;top:71px;font-size:10px;color:#262626;font-weight:normal;">Function RVA</div>
<div class="t" style="left:243px;top:71px;font-size:10px;color:#262626;font-weight:normal;">0013</div>
<div class="t" style="left:272px;top:71px;font-size:10px;color:#262626;font-weight:normal;">send</div>
<div class="t" style="left:-9.300000000000011px;top:85px;width:80px;text-align:center;font-size:10px;color:#262626">00000878</div>
<div class="t" style="left:58px;top:85px;width:80px;text-align:center;font-size:10px;color:#262626">00002F51</div>
<div class="t" style="left:133.5px;top:85px;font-size:10px;color:#262626;font-weight:normal;">Function RVA</div>
<div class="t" style="left:243px;top:85px;font-size:10px;color:#262626;font-weight:normal;">0014</div>
<div class="t" style="left:272px;top:85px;font-size:10px;color:#262626;font-weight:normal;">sendto</div>
<div class="t" style="left:-9.300000000000011px;top:99px;width:80px;text-align:center;font-size:10px;color:#262626">0000087C</div>
<div class="t" style="left:58px;top:99px;width:80px;text-align:center;font-size:10px;color:#262626">00004521</div>
<div class="t" style="left:133.5px;top:99px;font-size:10px;color:#262626;font-weight:normal;">Function RVA</div>
<div class="t" style="left:243px;top:99px;font-size:10px;color:#262626;font-weight:normal;">0015</div>
<div class="t" style="left:272px;top:99px;font-size:10px;color:#262626;font-weight:normal;">setsockopt</div>
<div class="t" style="left:-9.300000000000011px;top:113px;width:80px;text-align:center;font-size:10px;color:#262626">00000880</div>
<div class="t" style="left:58px;top:113px;width:80px;text-align:center;font-size:10px;color:#262626">00010BF6</div>
<div class="t" style="left:133.5px;top:113px;font-size:10px;color:#262626;font-weight:normal;">Function RVA</div>
<div class="t" style="left:243px;top:113px;font-size:10px;color:#262626;font-weight:normal;">0016</div>
<div class="t" style="left:272px;top:113px;font-size:10px;color:#262626;font-weight:normal;">shutdown</div>
<div class="t" style="left:-9.300000000000011px;top:127px;width:80px;text-align:center;font-size:10px;color:#262626">00000884</div>
<div class="t" style="left:58px;top:127px;width:80px;text-align:center;font-size:10px;color:#262626">00004211</div>
<div class="t" style="left:133.5px;top:127px;font-size:10px;color:#262626;font-weight:normal;">Function RVA</div>
<div class="t" style="left:243px;top:127px;font-size:10px;color:#262626;font-weight:normal;">0017</div>
<div class="t" style="left:272px;top:127px;font-size:10px;color:#262626;font-weight:normal;">socket</div>
<div class="t" style="left:-9.300000000000011px;top:141px;width:80px;text-align:center;font-size:10px;color:#262626">00000888</div>
<div class="t" style="left:58px;top:141px;width:80px;text-align:center;font-size:10px;color:#262626">00002899</div>
<div class="t" style="left:133.5px;top:141px;font-size:10px;color:#262626;font-weight:normal;">Function RVA</div>
<div class="t" style="left:243px;top:141px;font-size:10px;color:#262626;font-weight:normal;">0018</div>
<div class="t" style="left:272px;top:141px;font-size:10px;color:#262626;font-weight:normal;">GetAddrInfoW</div>
<div class="t" style="left:-9.300000000000011px;top:155px;width:80px;text-align:center;font-size:10px;color:#262626">0000088C</div>
<div class="t" style="left:58px;top:155px;width:80px;text-align:center;font-size:10px;color:#262626">0000C504</div>
<div class="t" style="left:133.5px;top:155px;font-size:10px;color:#262626;font-weight:normal;">Function RVA</div>
<div class="t" style="left:243px;top:155px;font-size:10px;color:#262626;font-weight:normal;">0019</div>
<div class="t" style="left:272px;top:155px;font-size:10px;color:#262626;font-weight:normal;">GetNameInfoW</div>
<div class="r" style="left:0px;top:168px;width:489px;height:15px;background:#316AC5;"></div>
<div class="r" style="left:0px;top:168px;width:489px;height:1px;background:repeating-linear-gradient(90deg,#E6B46A 0 1px,#7C8AA0 1px 2px);"></div>
<div class="r" style="left:0px;top:182px;width:489px;height:1px;background:repeating-linear-gradient(90deg,#E6B46A 0 1px,#7C8AA0 1px 2px);"></div>
<div class="r" style="left:0px;top:168px;width:1px;height:15px;background:repeating-linear-gradient(180deg,#E6B46A 0 1px,#7C8AA0 1px 2px);"></div>
<div class="t" style="left:-9.300000000000011px;top:169px;width:80px;text-align:center;font-size:10px;color:#FFFFFF">00000890</div>
<div class="t" style="left:58px;top:169px;width:80px;text-align:center;font-size:10px;color:#FFFFFF">00011EE1</div>
<div class="t" style="left:133.5px;top:169px;font-size:10px;color:#FFFFFF;font-weight:normal;">Function RVA</div>
<div class="t" style="left:243px;top:169px;font-size:10px;color:#FFFFFF;font-weight:normal;">001A</div>
<div class="t" style="left:272px;top:169px;font-size:10px;color:#FFFFFF;font-weight:normal;">WSApSetPostRoutine</div>
<div class="t" style="left:-9.300000000000011px;top:183px;width:80px;text-align:center;font-size:10px;color:#262626">00000894</div>
<div class="t" style="left:58px;top:183px;width:80px;text-align:center;font-size:10px;color:#262626">00002B0B</div>
<div class="t" style="left:133.5px;top:183px;font-size:10px;color:#262626;font-weight:normal;">Function RVA</div>
<div class="t" style="left:243px;top:183px;font-size:10px;color:#262626;font-weight:normal;">001B</div>
<div class="t" style="left:272px;top:183px;font-size:10px;color:#262626;font-weight:normal;">FreeAddrInfoW</div>
</div>
<div class="r" style="left:776px;top:311px;width:13px;height:206px;background:linear-gradient(90deg,#EFEDE5,#FDFDFA);"></div>
<div class="r" style="left:776px;top:311px;width:13px;height:12px;background:linear-gradient(135deg,#E3EBFE 0%,#C8D7FC 55%,#B9CCFA 100%);border-radius:2px;box-shadow:inset 0 0 0 1px #CCDAFB;"></div>
<svg class="r" style="left:776px;top:311px;" width="13" height="12" viewBox="0 0 13 12"><polyline points="3.5,7.5 6.5,4.5 9.5,7.5" fill="none" stroke="#4D6185" stroke-width="1.8"/></svg>
<div class="r" style="left:776px;top:328px;width:13px;height:7px;background:linear-gradient(90deg,#CCD9FC,#BDCFFA 60%,#B7CAF7);border-radius:2px;box-shadow:inset 0 0 0 1px #B3C6F4;"></div>
<div class="r" style="left:776px;top:504px;width:13px;height:12px;background:linear-gradient(135deg,#E3EBFE 0%,#C8D7FC 55%,#B9CCFA 100%);border-radius:2px;box-shadow:inset 0 0 0 1px #CCDAFB;"></div>
<svg class="r" style="left:776px;top:504px;" width="13" height="12" viewBox="0 0 13 12"><polyline points="3.5,4.5 6.5,7.5 9.5,4.5" fill="none" stroke="#4D6185" stroke-width="1.8"/></svg>
<div class="r" style="left:776px;top:517px;width:13px;height:12px;background:#ECE9D8;"></div>
<div class="r" style="left:287px;top:517px;width:489px;height:12px;background:linear-gradient(180deg,#EFEDE5,#FDFDFA);"></div>
<div class="r" style="left:287px;top:517px;width:12px;height:12px;background:linear-gradient(135deg,#E3EBFE 0%,#C8D7FC 55%,#B9CCFA 100%);border-radius:2px;box-shadow:inset 0 0 0 1px #CCDAFB;"></div>
<svg class="r" style="left:287px;top:517px;" width="12" height="12" viewBox="0 0 12 12"><polyline points="7.5,3.0 4.5,6.0 7.5,9.0" fill="none" stroke="#4D6185" stroke-width="1.8"/></svg>
<div class="r" style="left:300px;top:517px;width:279px;height:12px;background:linear-gradient(180deg,#CCD9FC,#BDCFFA 60%,#B7CAF7);border-radius:2px;box-shadow:inset 0 0 0 1px #B3C6F4;"></div>
<div class="r" style="left:437px;top:520px;width:1px;height:6px;background:#A4B9EE;"></div>
<div class="r" style="left:439px;top:520px;width:1px;height:6px;background:#A4B9EE;"></div>
<div class="r" style="left:441px;top:520px;width:1px;height:6px;background:#A4B9EE;"></div>
<div class="r" style="left:763px;top:517px;width:12px;height:12px;background:linear-gradient(135deg,#E3EBFE 0%,#C8D7FC 55%,#B9CCFA 100%);border-radius:2px;box-shadow:inset 0 0 0 1px #CCDAFB;"></div>
<svg class="r" style="left:763px;top:517px;" width="12" height="12" viewBox="0 0 12 12"><polyline points="4.5,3.0 7.5,6.0 4.5,9.0" fill="none" stroke="#4D6185" stroke-width="1.8"/></svg>
<div class="r" style="left:0px;top:531px;width:786px;height:1px;background:#D2CEBD;"></div>
<div class="r" style="left:0px;top:532px;width:786px;height:1px;background:#E3E0D1;"></div>
<div class="t" style="left:-3px;top:533px;font-size:10px;transform:scaleX(0.82);transform-origin:0 0">Viewing</div>
<div class="t" style="left:29px;top:533px;font-size:10px;transform:scaleX(0.82);transform-origin:0 0">EXPORT Address Table</div>
<div class="r" style="left:759px;top:539px;width:18px;height:10px;background:linear-gradient(180deg,#BFF2FF,#8ED8F8);border:1px solid #3C8CC8;border-radius:3px;box-sizing:border-box;"></div>
<div class="r" style="left:767px;top:541px;width:2px;height:6px;background:#000;"></div>
<svg class="r" style="left:579px;top:38px;" width="47" height="36" viewBox="0 0 47 36"><ellipse cx="23.50" cy="18.50" rx="16.90" ry="11.30" fill="none" stroke="#FFEF00" stroke-width="5"/></svg>
<svg class="r" style="left:578px;top:98px;" width="52" height="31" viewBox="0 0 52 31"><ellipse cx="26.00" cy="15.50" rx="19.90" ry="9.30" fill="none" stroke="#FFEF00" stroke-width="4.2"/></svg>
<svg class="r" style="left:575px;top:128px;" width="55" height="29" viewBox="0 0 55 29"><ellipse cx="27.30" cy="14.70" rx="21.80" ry="8.50" fill="none" stroke="#FFEF00" stroke-width="4"/></svg>
<svg class="r" style="left:514px;top:341px;" width="93" height="36" viewBox="0 0 93 36"><ellipse cx="46.60" cy="18.40" rx="39.70" ry="11.00" fill="none" stroke="#FFEF00" stroke-width="5"/></svg>
<svg class="r" style="left:510px;top:383px;" width="93" height="37" viewBox="0 0 93 37"><ellipse cx="46.40" cy="18.80" rx="39.60" ry="11.70" fill="none" stroke="#FFEF00" stroke-width="5"/></svg>
<svg class="r" style="left:504px;top:440px;" width="112" height="34" viewBox="0 0 112 34"><ellipse cx="56.40" cy="17.10" rx="49.30" ry="10.20" fill="none" stroke="#FFEF00" stroke-width="5"/></svg>
</div>
</body></html>
